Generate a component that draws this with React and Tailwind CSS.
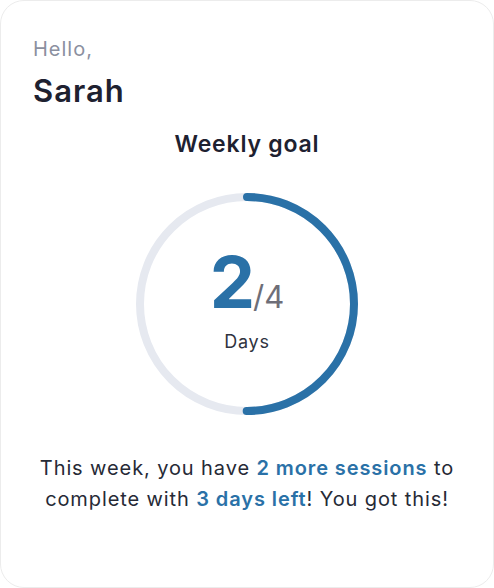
import React from 'react';

function GoalRing({ done, total }) {
  const r = 107;
  const c = 2 * Math.PI * r;
  const pct = done / total;
  return (
    <div className="relative w-[222px] h-[222px]">
      <svg width="222" height="222" viewBox="0 0 222 222" className="-rotate-90">
        <circle cx="111" cy="111" r={r} fill="none" stroke="#e6e9f0" strokeWidth="8" />
        <circle
          cx="111"
          cy="111"
          r={r}
          fill="none"
          stroke="#2a71a7"
          strokeWidth="8"
          strokeLinecap="round"
          strokeDasharray={`${c * pct} ${c}`}
        />
      </svg>
      <div className="absolute inset-0 flex flex-col items-center justify-center pb-[8px]">
        <div className="flex items-baseline leading-none">
          <span className="text-[72px] font-bold text-[#2a71a7] tracking-[-2px]">{done}</span>
          <span className="text-[31px] text-[#6e6e78] font-normal">/{total}</span>
        </div>
        <div className="text-[18px] text-[#2f3340] mt-[10px] tracking-[0.8px]">Days</div>
      </div>
    </div>
  );
}

export default function App() {
  return (
    <div className="w-[494px] h-[588px] bg-white" style={{ fontFamily: 'Inter, "Noto Sans", sans-serif' }}>
      <div className="h-full rounded-[24px] border border-[#ececec] bg-white px-[32px] pt-[34px]">
        <div className="text-[20px] text-[#8b90a0] leading-[28px] tracking-[1px]">Hello,</div>
        <div className="text-[31px] font-semibold text-[#1e2130] leading-[40px] mt-[8px] tracking-[1px]">Sarah</div>
        <div className="flex flex-col items-center">
          <h2 className="text-[23px] font-semibold text-[#1e2130] mt-[18px] leading-[30px] tracking-[0.8px]">Weekly goal</h2>
          <div className="mt-[34px]">
            <GoalRing done={2} total={4} />
          </div>
          <div className="mt-[38px] text-center text-[20px] leading-[31px] text-[#262a36] tracking-[0.9px] whitespace-nowrap">
            <p>
              This week, you have <span className="font-semibold text-[#2a71a7]">2 more sessions</span> to
            </p>
            <p>
              complete with <span className="font-semibold text-[#2a71a7]">3 days left</span>! You got this!
            </p>
          </div>
        </div>
      </div>
    </div>
  );
}
